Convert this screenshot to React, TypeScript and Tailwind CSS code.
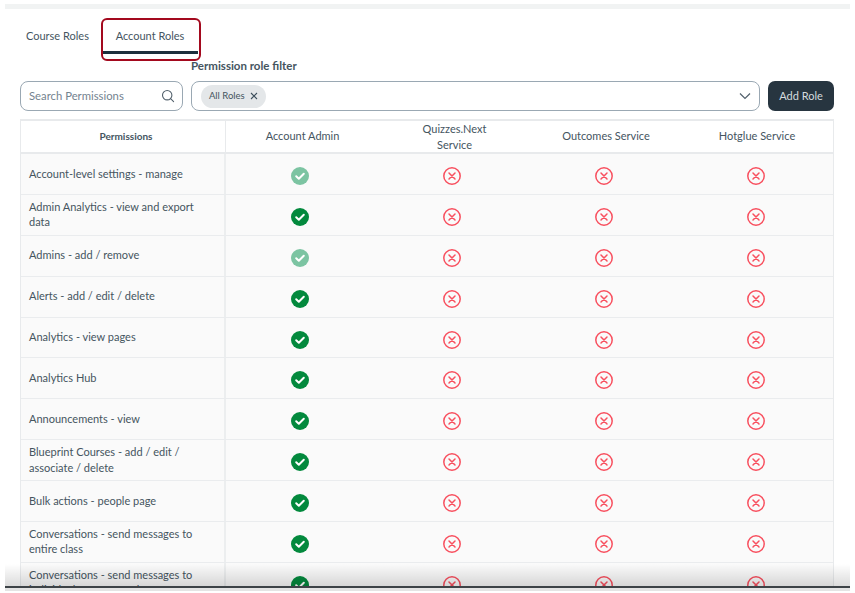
import React from "react";

const rows: { label: string[]; state: "soft" | "on" }[] = [
  { label: ["Account-level settings - manage"], state: "soft" },
  { label: ["Admin Analytics - view and export", "data"], state: "on" },
  { label: ["Admins - add / remove"], state: "soft" },
  { label: ["Alerts - add / edit / delete"], state: "on" },
  { label: ["Analytics - view pages"], state: "on" },
  { label: ["Analytics Hub"], state: "on" },
  { label: ["Announcements - view"], state: "on" },
  { label: ["Blueprint Courses - add / edit /", "associate / delete"], state: "on" },
  { label: ["Bulk actions - people page"], state: "on" },
  { label: ["Conversations - send messages to", "entire class"], state: "on" },
  { label: ["Conversations - send messages to", "individual course members"], state: "on" },
];

function Check({ soft }: { soft: boolean }) {
  return (
    <svg width="18" height="18" viewBox="0 0 18 18" className="ml-[-4px] mt-[4px]">
      <circle cx="9" cy="9" r="9" fill={soft ? "#7cc4a2" : "#03893d"} />
      <path d="M5.2 9.3 L7.8 11.8 L12.8 6.8" fill="none" stroke="#fff" strokeWidth="2" strokeLinecap="round" strokeLinejoin="round" />
    </svg>
  );
}

function Cross() {
  return (
    <svg width="18" height="18" viewBox="0 0 18 18" className="ml-[-4px] mt-[4px]">
      <circle cx="9" cy="9" r="8.2" fill="none" stroke="#f8505f" strokeWidth="1.5" />
      <path d="M6 6 L12 12 M12 6 L6 12" fill="none" stroke="#f8505f" strokeWidth="1.5" strokeLinecap="round" />
    </svg>
  );
}

export default function App() {
  return (
    <div className="relative h-[593px] w-[855px] overflow-hidden bg-white font-['Lato',sans-serif] text-[#45555f]">
      <div className="h-[593px] px-[5px] pt-[4px]">
        <div className="h-[5px] w-[845px] bg-[#f1f3f3]" />
        <div className="relative h-[579px] w-[845px] overflow-hidden rounded-t-[8px] border-b-2 border-[#3d4347] bg-white pl-[15px]">
          {/* tabs */}
          <div className="flex h-[46px] items-start pt-[19px] text-[11px]">
            <div className="ml-[6px] w-[85px] leading-[16px]">Course Roles</div>
            <div className="w-[78px] text-center leading-[16px]">Account Roles</div>
          </div>
          <div className="absolute left-[98px] top-[42px] h-[3px] w-[95px] bg-[#1d2f3d]" />
          <div className="absolute left-[96px] top-[9px] h-[43px] w-[100px] rounded-[6px] border-[2.5px] border-[#a3091e]" />

          {/* filter */}
          <div className="ml-[171px] mt-[3px] h-[16px] text-[11.5px] font-bold leading-[16px]">Permission role filter</div>
          <div className="mt-[7px] flex h-[30px] w-[814px] gap-[8px]">
            <div className="flex w-[163px] items-center justify-between rounded-[8px] border border-[#9aa8b3] pl-[8px] pr-[7px] text-[11.3px] text-[#74838f]">
              <span>Search Permissions</span>
              <svg width="14" height="14" viewBox="0 0 14 14" fill="none" stroke="#52616c" strokeWidth="1.1">
                <circle cx="6.2" cy="6.2" r="4.7" />
                <path d="M9.6 9.6 L12.6 12.6" strokeLinecap="round" />
              </svg>
            </div>
            <div className="flex w-[570px] items-center justify-between rounded-[8px] border border-[#9aa8b3] pl-[9px] pr-[8px]">
              <div className="flex h-[23px] w-[65px] items-center justify-center gap-[5px] rounded-full bg-[#e4e7e9] text-[9.5px]">
                <span>All Roles</span>
                <svg width="8" height="8" viewBox="0 0 8 8" stroke="#3f515e" strokeWidth="1.1" fill="none">
                  <path d="M1 1 L7 7 M7 1 L1 7" />
                </svg>
              </div>
              <svg width="12" height="8" viewBox="0 0 12 8" fill="none" stroke="#52616c" strokeWidth="1.2">
                <path d="M1 1.5 L6 6.5 L11 1.5" />
              </svg>
            </div>
            <div className="flex w-[66px] items-center justify-center rounded-[7px] bg-[#273540] text-[11px] text-[#d5dbdf]">Add Role</div>
          </div>

          {/* table */}
          <div className="mt-[8px] w-[814px] border-l border-r border-t-2 border-[#e8eaec]">
            <div className="grid h-[33px] grid-cols-[205px_repeat(3,152px)_153px] items-center border-b-2 border-[#e8eaec] text-center text-[11px]">
              <div className="flex h-full items-center justify-center border-r border-[#e8eaec] pl-[6px] text-[10px] font-bold">Permissions</div>
              <div className="pl-[1px]">Account Admin</div>
              <div className="pl-[1px] leading-[15.5px]">Quizzes.Next<br />Service</div>
              <div>Outcomes Service</div>
              <div className="pr-[3px]">Hotglue Service</div>
            </div>
            {rows.map((r, i) => (
              <div key={i} className="grid h-[40.9px] grid-cols-[205px_repeat(3,152px)_153px] items-center border-b border-[#eaecee] bg-[#fafafa]">
                <div className="flex h-full flex-col justify-center border-r-2 border-[#eceeef] pb-[1px] pl-[8px] text-[11px] leading-[15.5px]">
                  {r.label.map((l) => (
                    <div key={l}>{l}</div>
                  ))}
                </div>
                <div className="flex justify-center">
                  <Check soft={r.state === "soft"} />
                </div>
                <div className="flex justify-center"><Cross /></div>
                <div className="flex justify-center"><Cross /></div>
                <div className="flex justify-center pr-[1px]"><Cross /></div>
              </div>
            ))}
          </div>

          <div className="pointer-events-none absolute bottom-0 left-0 h-[22px] w-full bg-gradient-to-b from-transparent to-[#00000024]" />
        </div>
        <div className="h-[3px] w-[845px] bg-[#e4e4e4]" />
      </div>
    </div>
  );
}
